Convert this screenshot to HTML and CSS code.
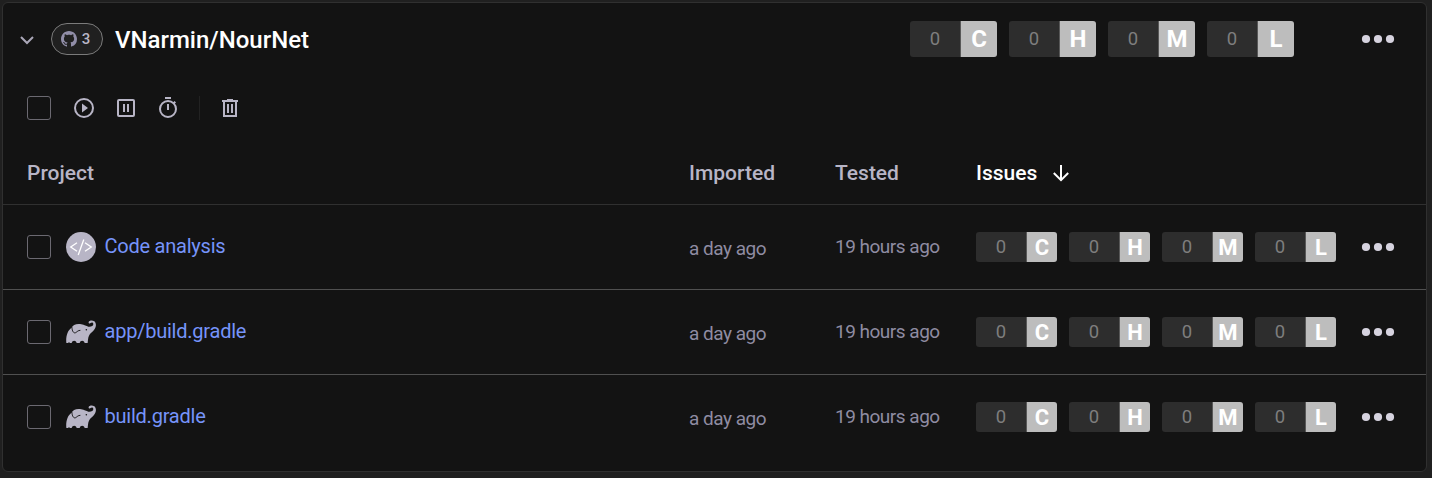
FILE: index.html
```html
<!DOCTYPE html>
<html lang="en">
<head>
<meta charset="utf-8">
<title>Projects</title>
<link rel="stylesheet" href="styles.css">
</head>
<body>
<svg class="defs" width="0" height="0" aria-hidden="true">
  <symbol id="dots" viewBox="0 0 34 10"><circle cx="5" cy="5" r="4.1"/><circle cx="17" cy="5" r="4.1"/><circle cx="29" cy="5" r="4.1"/></symbol>
  <symbol id="gradle" viewBox="0 0 90 70">
    <path fill="currentColor" d="M1 68C-1 49 4 30 17 22C20 14 32 9 46 12C55 13 61 18 67 19C75 20 82 17 82 11C82 6 77 5 74 8C71 11 67 9 68 5C70 0 79-1 85 3C92 9 91 21 84 29C79 35 72 39 69 46C66 52 66 60 65 68H56C54 59 43 59 41 68H32C30 59 19 59 17 68H11C10 64 8 64 7 68Z"/>
    <path fill="none" stroke="#131313" stroke-width="2.8" stroke-linecap="round" d="M18 22C18 32 23 40 29 37C34 34 36 30 42 30"/>
    <circle cx="61" cy="28" r="2.3" fill="#131313"/>
  </symbol>
</svg>
<main class="card">
  <header class="head">
    <svg class="chevron" width="16" height="10" viewBox="0 0 16 10"><path d="M2 2l6 6 6-6"/></svg>
    <span class="pill">
      <svg width="16" height="16" viewBox="0 0 16 16"><path d="M8 0C3.58 0 0 3.58 0 8c0 3.54 2.29 6.53 5.47 7.59.4.07.55-.17.55-.38 0-.19-.01-.82-.01-1.49-2.01.37-2.53-.49-2.69-.94-.09-.23-.48-.94-.82-1.13-.28-.15-.68-.52-.01-.53.63-.01 1.08.58 1.23.82.72 1.21 1.87.87 2.33.66.07-.52.28-.87.51-1.07-1.78-.2-3.64-.89-3.64-3.95 0-.87.31-1.59.82-2.15-.08-.2-.36-1.02.08-2.12 0 0 .67-.21 2.2.82.64-.18 1.32-.27 2-.27s1.36.09 2 .27c1.53-1.04 2.2-.82 2.2-.82.44 1.1.16 1.92.08 2.12.51.56.82 1.27.82 2.15 0 3.07-1.87 3.75-3.65 3.95.29.25.54.73.54 1.48 0 1.07-.01 1.93-.01 2.2 0 .21.15.46.55.38A8.01 8.01 0 0 0 16 8c0-4.42-3.58-8-8-8z"/></svg>
      <span>3</span>
    </span>
    <h1 class="title">VNarmin/NourNet</h1>
    <div class="issues issues-lg">
      <span class="sev"><span class="count">0</span><b class="level">C</b></span>
      <span class="sev"><span class="count">0</span><b class="level">H</b></span>
      <span class="sev"><span class="count">0</span><b class="level">M</b></span>
      <span class="sev"><span class="count">0</span><b class="level">L</b></span>
    </div>
    <svg class="more" width="34" height="10"><use href="#dots"/></svg>
  </header>

  <div class="toolbar">
    <span class="check"></span>
    <svg class="tool" width="24" height="24" viewBox="0 0 24 24"><circle cx="12" cy="12" r="9"/><path class="solid" d="M10 7.5v9l6-4.5z"/></svg>
    <svg class="tool" width="24" height="24" viewBox="0 0 24 24"><rect x="4" y="4" width="16" height="16" rx="1"/><path d="M10 8v8M14 8v8"/></svg>
    <svg class="tool" width="24" height="24" viewBox="0 0 24 24"><circle cx="12" cy="13" r="8"/><path d="M9 2h6M12 8v6M17.5 7.5l1.8-1.8"/></svg>
    <span class="sep"></span>
    <svg class="tool" width="24" height="24" viewBox="0 0 24 24"><path d="M4 5h16M9 4h6M6 5v15h12V5M10 8v9M14 8v9"/></svg>
  </div>

  <div class="row labels">
    <span class="project">Project</span><span>Imported</span><span>Tested</span>
    <span class="sorted">Issues <svg width="18" height="18" viewBox="0 0 18 18"><path d="M9 1v15M1.8 9L9 16.2 16.2 9"/></svg></span>
  </div>

  <div class="row item">
    <div class="project"><span class="check"></span>
      <svg class="logo" width="30" height="30" viewBox="0 0 30 30"><circle cx="15" cy="15" r="15" fill="currentColor"/><path class="code" d="M11 10.8L4.7 15l6.3 4.2M19 10.8l6.3 4.2-6.3 4.2M17.8 7.5l-5.6 15.5"/></svg>
      <a class="name">Code analysis</a></div>
    <span class="imported">a day ago</span><span class="tested">19 hours ago</span>
    <div class="issues">
      <span class="sev"><span class="count">0</span><b class="level">C</b></span>
      <span class="sev"><span class="count">0</span><b class="level">H</b></span>
      <span class="sev"><span class="count">0</span><b class="level">M</b></span>
      <span class="sev"><span class="count">0</span><b class="level">L</b></span>
    </div>
    <svg class="more" width="34" height="10"><use href="#dots"/></svg>
  </div>

  <div class="row item">
    <div class="project"><span class="check"></span><svg class="logo" width="30" height="24"><use href="#gradle"/></svg><a class="name">app/build.gradle</a></div>
    <span class="imported">a day ago</span><span class="tested">19 hours ago</span>
    <div class="issues">
      <span class="sev"><span class="count">0</span><b class="level">C</b></span>
      <span class="sev"><span class="count">0</span><b class="level">H</b></span>
      <span class="sev"><span class="count">0</span><b class="level">M</b></span>
      <span class="sev"><span class="count">0</span><b class="level">L</b></span>
    </div>
    <svg class="more" width="34" height="10"><use href="#dots"/></svg>
  </div>

  <div class="row item">
    <div class="project"><span class="check"></span><svg class="logo" width="30" height="24"><use href="#gradle"/></svg><a class="name">build.gradle</a></div>
    <span class="imported">a day ago</span><span class="tested">19 hours ago</span>
    <div class="issues">
      <span class="sev"><span class="count">0</span><b class="level">C</b></span>
      <span class="sev"><span class="count">0</span><b class="level">H</b></span>
      <span class="sev"><span class="count">0</span><b class="level">M</b></span>
      <span class="sev"><span class="count">0</span><b class="level">L</b></span>
    </div>
    <svg class="more" width="34" height="10"><use href="#dots"/></svg>
  </div>
</main>
</body>
</html>
```
FILE: styles.css
```css
* { box-sizing: border-box; }
body { margin: 0; padding: 2px; height: 478px; overflow: hidden; background: #202020; font-family: Roboto, sans-serif; font-size: 20px; color: #b8b5c6; }
.defs { display: block; }
.card { width: 1425px; height: 470px; background: #131313; border: 1px solid #303030; border-radius: 6px; }
.head { display: flex; align-items: center; height: 72px; padding: 0 31px 0 16px; }
.chevron { fill: none; stroke: #aaa7b8; stroke-width: 2; margin-top: 1px; }
.pill { display: flex; align-items: center; justify-content: center; gap: 5px; width: 52px; height: 32px; margin-left: 16px; padding-right: 3px; border: 1px solid #7b7b7b; border-radius: 16px; background: #202020; font-size: 15px; font-weight: 500; }
.pill svg { fill: #918ea8; }
.title { flex: 1; margin: 0 0 0 12px; font-size: 24px; line-height: 28px; font-weight: 500; color: #fff; padding-top: 2px; }
.issues { display: flex; gap: 12px; }
.sev { display: flex; width: 81px; height: 30px; border-radius: 3px; overflow: hidden; background: #2d2d2d; }
.count { flex: 1; display: flex; align-items: center; justify-content: center; font-size: 18.5px; color: #7e7e7e; border-right: 1px solid #585858; padding-bottom: 1px; }
.level { display: flex; align-items: center; justify-content: center; width: 30px; font-size: 22px; color: #fff; background: #bdbdbd; padding-top: 1px; }
.issues-lg { margin-right: 67px; }
.issues-lg .sev { width: 87px; height: 36px; }
.issues-lg .level { width: 36px; font-size: 24px; padding-top: 0; }
.more { fill: #d6d3df; }
.toolbar { display: flex; align-items: center; height: 66px; padding-left: 24px; }
.check { flex: none; width: 24px; height: 24px; border: 1px solid #6b6971; border-radius: 3px; }
.tool { fill: none; stroke: #b8b5c6; stroke-width: 2; margin-right: 18px; }
.check + .tool { margin-left: 21px; }
.solid { fill: #b8b5c6; stroke: none; }
.sep { width: 1px; height: 24px; background: #222; margin: 0 18px 0 1px; }
.row { display: grid; grid-template-columns: 662px 146px 141px 385px 34px; align-items: center; padding-left: 24px; }
.labels { height: 64px; border-bottom: 1px solid #303030; font-size: 21px; font-weight: 500; }
.sorted { display: flex; align-items: center; gap: 15px; color: #fff; }
.sorted svg { fill: none; stroke: #fff; stroke-width: 2; }
.item { height: 85px; border-bottom: 1px solid #505050; }
.item:last-child { border-bottom-color: transparent; }
.project { display: flex; align-items: center; }
.logo { margin: 0 8.5px 0 15px; color: #b8b5c6; }
.code { fill: none; stroke: #fff; stroke-width: 1.3; }
.name { color: #7694fa; margin-top: -3px; letter-spacing: -.23px; }
.imported, .tested { font-size: 19px; color: #8f8ca2; letter-spacing: -.5px; }
.imported { padding-top: 3px; }
.tested { padding-bottom: 2px; }
```
